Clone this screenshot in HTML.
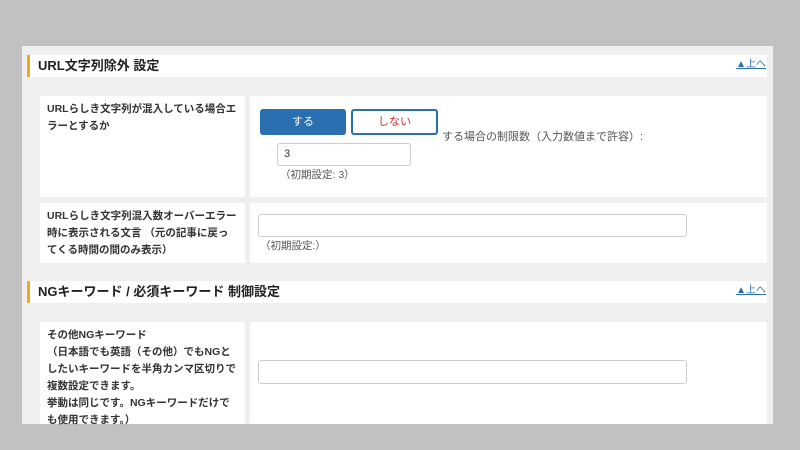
<!DOCTYPE html>
<html><head><meta charset="utf-8"><style>
*{margin:0;padding:0;box-sizing:border-box}
body{width:800px;height:450px;background:#c1c1c1;font-family:"Liberation Sans","Noto Sans CJK JP",sans-serif;color:#333;position:relative;overflow:hidden}
.abs{position:absolute}
.panel{left:22px;top:46px;width:751px;height:378px;background:#efefef}
.hd{left:27px;width:740px;height:22px;background:#fff;border-left:3px solid #f0a81c;font-size:13px;font-weight:bold;padding-left:8px;line-height:22px;color:#222}
.top{font-size:10px;color:#2a6fb0;text-decoration:underline;right:34px}
.cell{background:#fff;border-radius:2px}
.lab{font-size:10.5px;font-weight:bold;line-height:17px;padding:5px 7px;color:#333}
.inp{background:#fff;border:1px solid #ccc;border-radius:3px;font-size:11px;padding-left:6px;line-height:21px}
.note{font-size:10.5px;color:#555}
</style></head><body>
<div class="abs panel"></div>
<div class="abs hd" style="top:55px">URL文字列除外 設定</div>
<div class="abs top" style="top:55px">▲上へ</div>

<div class="abs cell lab" style="left:40px;top:96px;width:205px;height:101px">URLらしき文字列が混入している場合エラーとするか</div>
<div class="abs cell" style="left:250px;top:96px;width:517px;height:101px"></div>
<div class="abs" style="left:260px;top:109px;width:86px;height:26px;background:#2a6fb0;border-radius:3px;color:#fff;font-size:11px;text-align:center;line-height:26px">する</div>
<div class="abs" style="left:351px;top:109px;width:87px;height:26px;background:#fff;border:2px solid #2a6fb0;border-radius:3px;color:#d03030;font-size:11px;text-align:center;line-height:22px">しない</div>
<div class="abs note" style="left:442px;top:128px;font-size:11px">する場合の制限数（入力数値まで許容）:</div>
<div class="abs inp" style="left:277px;top:143px;width:134px;height:23px">3</div>
<div class="abs note" style="left:280px;top:167px">（初期設定: 3）</div>

<div class="abs cell lab" style="left:40px;top:203px;width:205px;height:60px">URLらしき文字列混入数オーバーエラー時に表示される文言 （元の記事に戻ってくる時間の間のみ表示）</div>
<div class="abs cell" style="left:250px;top:203px;width:517px;height:60px"></div>
<div class="abs inp" style="left:258px;top:214px;width:429px;height:23px"></div>
<div class="abs note" style="left:260px;top:238px">（初期設定:）</div>

<div class="abs hd" style="top:281px">NGキーワード / 必須キーワード 制御設定</div>
<div class="abs top" style="top:281px">▲上へ</div>

<div class="abs cell lab" style="left:40px;top:322px;width:205px;height:102px">その他NGキーワード<br>（日本語でも英語（その他）でもNGとしたいキーワードを半角カンマ区切りで複数設定できます。<br>挙動は同じです。NGキーワードだけでも使用できます。）</div>
<div class="abs cell" style="left:250px;top:322px;width:517px;height:102px"></div>
<div class="abs inp" style="left:258px;top:360px;width:429px;height:24px"></div>
</body></html>
